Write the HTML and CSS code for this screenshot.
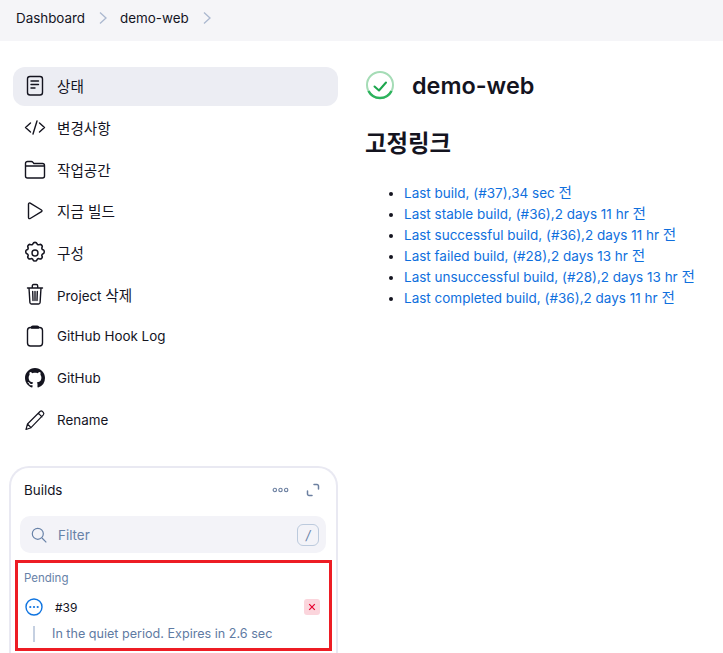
FILE: index.html
```html
<!DOCTYPE html>
<html lang="ko">
<head>
    <meta charset="UTF-8">
    <meta name="viewport" content="width=device-width, initial-scale=1.0">
    <title>demo-web</title>
    <link rel="stylesheet" href="styles.css">
</head>
<body>
    <div class="crumbs">
        <a href="#">Dashboard</a>
        <svg class="chev" viewBox="0 0 10 14"><path d="M2 1.500 8 7l-6 5.500"/></svg>
        <a href="#">demo-web</a>
        <svg class="chev" viewBox="0 0 10 14"><path d="M2 1.500 8 7l-6 5.500"/></svg>
    </div>
    <div class="page">
        <div class="side">
            <div class="tasks">
                <a class="task on" href="#">
                    <svg class="ico" viewBox="0 0 24 24"><rect x="4.500" y="2.500" width="15" height="18.500" rx="2.500"/><path d="M8 7h7.500M8 10.500h7.500M8 14h4"/></svg>
                    <span class="ko">상태</span>
                </a>
                <a class="task" href="#">
                    <svg class="ico" viewBox="0 0 24 24"><path d="M7.500 8 2.500 12.500l5 4.500M16.500 8l5 4.500-5 4.500M14 6 10 19"/></svg>
                    <span class="ko">변경사항</span>
                </a>
                <a class="task" href="#">
                    <svg class="ico" viewBox="0 0 24 24"><path d="M2.500 9V6.500a2 2 0 0 1 2-2h3.800c.8 0 1.200.3 1.700.9l.9 1.100h8.600a2 2 0 0 1 2 2v10.500a2 2 0 0 1-2 2h-15a2 2 0 0 1-2-2zM2.500 9h19"/></svg>
                    <span class="ko">작업공간</span>
                </a>
                <a class="task" href="#">
                    <svg class="ico" viewBox="0 0 24 24"><path d="M5.500 5c0-1 1-1.300 1.700-.9L18.500 11c.7.500.7 1.200 0 1.700L7.200 19.500c-.7.400-1.700 0-1.700-1z"/></svg>
                    <span class="ko">지금 빌드</span>
                </a>
                <a class="task" href="#">
                    <svg class="ico" viewBox="0 0 24 24"><circle cx="12" cy="12" r="3"/><path transform="translate(12 12) scale(1.120) translate(-12 -12)" d="M10.300 3.500c.4-1.300 3-1.300 3.400 0 .3 1 1.400 1.500 2.300 1 1.200-.7 3 1.200 2.300 2.400-.5.900 0 2 1 2.300 1.300.4 1.300 3 0 3.400-1 .3-1.500 1.400-1 2.300.7 1.200-1.100 3-2.300 2.300-.9-.5-2 0-2.300 1-.4 1.300-3 1.300-3.400 0-.3-1-1.400-1.500-2.300-1-1.200.7-3-1.100-2.300-2.300.5-.9 0-2-1-2.300-1.300-.4-1.300-3 0-3.400 1-.3 1.500-1.400 1-2.300-.7-1.200 1.100-3.100 2.300-2.400.9.500 2 0 2.300-1z"/></svg>
                    <span class="ko">구성</span>
                </a>
                <a class="task" href="#">
                    <svg class="ico" viewBox="0 0 24 24"><path d="M4.500 6h15M9.300 5.500V4c0-.8.500-1.500 1.300-1.500h2.800c.8 0 1.300.7 1.300 1.500v1.500M6 6l.9 14.500c.1.900.6 1.500 1.500 1.500h7.200c.9 0 1.400-.6 1.500-1.500L18 6M9.700 9.500l.3 9M12 9.500v9M14.300 9.500l-.3 9"/></svg>
                    <span>Project <span class="ko">삭제</span></span>
                </a>
                <a class="task" href="#">
                    <svg class="ico" viewBox="0 0 24 24"><rect x="4.500" y="3.500" width="15" height="18.500" rx="3"/><path d="M8.500 3.500c0-.8.500-1.300 1.300-1.300h4.400c.8 0 1.300.5 1.300 1.300v.5h-7z"/></svg>
                    <span>GitHub Hook Log</span>
                </a>
                <a class="task" href="#">
                    <svg class="ico solid" viewBox="0 0 16 16"><path d="M8 0C3.580 0 0 3.580 0 8c0 3.540 2.290 6.530 5.470 7.590.4.070.55-.17.55-.38 0-.19-.01-.82-.01-1.490-2.010.37-2.530-.49-2.690-.94-.09-.23-.48-.94-.82-1.130-.28-.15-.68-.52-.01-.53.630-.01 1.080.58 1.230.82.720 1.210 1.870.87 2.330.66.070-.52.280-.87.510-1.070-1.780-.2-3.640-.89-3.640-3.950 0-.87.310-1.590.820-2.150-.08-.2-.36-1.020.08-2.120 0 0 .67-.21 2.200.82.640-.18 1.320-.27 2-.27s1.360.09 2 .27c1.530-1.040 2.200-.82 2.200-.82.440 1.100.16 1.920.08 2.120.51.560.82 1.270.82 2.150 0 3.070-1.870 3.750-3.650 3.950.29.250.54.730.54 1.480 0 1.070-.01 1.930-.01 2.200 0 .21.150.46.550.38A8.010 8.010 0 0 0 16 8c0-4.420-3.580-8-8-8z"/></svg>
                    <span>GitHub</span>
                </a>
                <a class="task" href="#">
                    <svg class="ico thin" viewBox="0 0 24 24"><path d="M3 21.500 4.500 16 17 3.500c.8-.7 1.700-.7 2.400 0l.9.900c.7.700.7 1.600 0 2.400L8 19.700zM4.500 16 8 19.700M15.300 5.200l3.600 3.600"/></svg>
                    <span>Rename</span>
                </a>
            </div>

            <div class="builds">
                <div class="builds-head">
                    <span>Builds</span>
                    <div class="head-btns">
                        <svg class="more" viewBox="0 0 18 6"><circle cx="3" cy="3" r="1.800"/><circle cx="9" cy="3" r="1.800"/><circle cx="15" cy="3" r="1.800"/></svg>
                        <svg class="expand" viewBox="0 0 14 14"><path d="M8 1.500h3a1.500 1.500 0 0 1 1.500 1.500v3M6 12.500H3A1.500 1.500 0 0 1 1.500 11V8"/></svg>
                    </div>
                </div>
                <div class="filter">
                    <svg class="search" viewBox="0 0 16 16"><circle cx="6.800" cy="6.800" r="5.500"/><path d="m11 11 4.300 4.300"/></svg>
                    <span class="filter-txt">Filter</span>
                    <span class="key">/</span>
                </div>
                <div class="pending">
                    <div class="pending-title">Pending</div>
                    <div class="build-row">
                        <svg class="dots" viewBox="0 0 18 18"><circle class="ring" cx="9" cy="9" r="8"/><circle cx="5.300" cy="9" r="1.100"/><circle cx="9" cy="9" r="1.100"/><circle cx="12.700" cy="9" r="1.100"/></svg>
                        <span class="num">#39</span>
                        <span class="cancel"><svg viewBox="0 0 10 10"><path d="M1.500 1.500l7 7M8.500 1.500l-7 7"/></svg></span>
                    </div>
                    <div class="build-desc">In the quiet period. Expires in 2.6 sec</div>
                </div>
            </div>
        </div>

        <div class="main">
            <div class="title">
                <svg class="status" viewBox="0 0 30 30">
                    <circle class="track" cx="15" cy="15" r="13"/>
                    <path class="arc" d="M3.500 21a13 13 0 0 0 23 0"/>
                    <path class="tick" d="m9.500 16.500 4.500 4 7-8"/>
                </svg>
                <h1>demo-web</h1>
            </div>
            <h2>고정링크</h2>
            <ul class="links">
                <li><a href="#">Last build, (#37),34 sec <span class="ko">전</span></a></li>
                <li><a href="#">Last stable build, (#36),2 days 11 hr <span class="ko">전</span></a></li>
                <li><a href="#">Last successful build, (#36),2 days 11 hr <span class="ko">전</span></a></li>
                <li><a href="#">Last failed build, (#28),2 days 13 hr <span class="ko">전</span></a></li>
                <li><a href="#">Last unsuccessful build, (#28),2 days 13 hr <span class="ko">전</span></a></li>
                <li><a href="#">Last completed build, (#36),2 days 11 hr <span class="ko">전</span></a></li>
            </ul>
        </div>
    </div>
</body>
</html>
```

FILE: styles.css
```css
*{padding: 0; margin: 0; box-sizing: border-box;}
a{text-decoration: none;}
html, body{height: 653px; overflow: hidden;}
body{
    font-family: Inter, "Noto Sans CJK KR", sans-serif;
    font-size: 13.400px;
    color: #14141f;
    background-color: #fff;
}
.ko{font-size: 14.600px;}

/* top */
.crumbs{
    height: 41px;
    padding: 0 0 5px 16px;
    display: flex;
    align-items: center;
    background-color: #f5f5f8;
}
.crumbs a{color: #14141f;}
.chev{
    width: 10px;
    height: 14px;
    margin: 0 12px 0 13px;
    fill: none;
    stroke: #abb8cf;
    stroke-width: 1.300;
}

.page{
    display: flex;
    height: 612px;
    padding-left: 9px;
}

/* left */
.side{width: 329px; flex-shrink: 0;}
.tasks{
    height: 399px;
    padding: 26px 0 0 4px;
}
.task{
    height: 39px;
    margin-bottom: 2.800px;
    padding: 0 0 2px 10px;
    display: flex;
    align-items: center;
    gap: 10px;
    border-radius: 12px;
    color: #14141f;
}
.task.on{background-color: #ecedf3;}
.ico{
    width: 24px;
    height: 24px;
    fill: none;
    stroke: #14141f;
    stroke-width: 1.400;
    stroke-linecap: round;
    stroke-linejoin: round;
}
.ico.thin{stroke-width: 1.200;}
.ico.solid{
    width: 20px;
    height: 20px;
    margin: 0 2px;
    fill: #14141f;
    stroke: none;
}

/* card runs on below the window, so it has no bottom edge here */
.builds{
    margin-top: 26px;
    height: 187px;
    padding: 0 10px 0 9px;
    border: 2px solid #e9e9f2;
    border-bottom: none;
    border-radius: 20px 20px 0 0;
}
.builds-head{
    height: 48px;
    padding: 0 6px 4px 4px;
    display: flex;
    align-items: center;
    justify-content: space-between;
}
.head-btns{display: flex; align-items: center; gap: 17px;}
.more{
    width: 17px;
    height: 6px;
    fill: none;
    stroke: #6b7fa0;
    stroke-width: 1.200;
}
.expand{
    width: 14px;
    height: 14px;
    fill: none;
    stroke: #6b7fa0;
    stroke-width: 1.500;
    stroke-linecap: round;
}
.filter{
    height: 37px;
    padding: 0 7px 0 11px;
    display: flex;
    align-items: center;
    background-color: #f3f3f8;
    border-radius: 10px;
    color: #6882a8;
}
.search{
    width: 16px;
    height: 16px;
    fill: none;
    stroke: #6882a8;
    stroke-width: 1.200;
}
.filter-txt{margin-left: 11px; flex: 1;}
.key{
    width: 22px;
    height: 22px;
    border: 1px solid #bccadd;
    border-radius: 6px;
    text-align: center;
    font-size: 13px;
    line-height: 20px;
    font-style: italic;
}
.pending{
    margin: 7px -6px 0 -5px;
    height: 91px;
    padding: 0 9px 0 6px;
    border: 3px solid #ed1c24;
}
.pending-title{
    margin-top: 6px;
    font-size: 11.500px;
    line-height: 18px;
    color: #6882a8;
}
.build-row{
    margin-top: 11px;
    height: 18px;
    display: flex;
    align-items: center;
}
.dots{
    width: 18px;
    height: 18px;
    margin-left: 1px;
    fill: #0f74e0;
}
.dots .ring{fill: none; stroke: #0f74e0; stroke-width: 1.400;}
.num{margin-left: 12px; flex: 1; font-size: 12px;}
.cancel{
    width: 16px;
    height: 16px;
    background-color: #fbd5dc;
    border-radius: 3px;
    display: flex;
    align-items: center;
    justify-content: center;
}
.cancel svg{
    width: 8px;
    height: 8px;
    fill: none;
    stroke: #e6002e;
    stroke-width: 1.500;
}
.build-desc{
    margin: 10px 0 0 9px;
    padding-left: 17px;
    height: 16px;
    border-left: 2px solid #c5d0e1;
    font-size: 12.600px;
    line-height: 16px;
    color: #5f7ba3;
}

/* right */
.main{padding: 29px 0 0 27px; flex: 1;}
.title{
    height: 32px;
    display: flex;
    align-items: center;
    gap: 17px;
}
.status{
    width: 30px;
    height: 30px;
    margin-top: -2px;
    fill: none;
}
.track{stroke: #a5dcb6; stroke-width: 2;}
.arc{stroke: #2db35d; stroke-width: 2.500;}
.tick{stroke: #1ca64d; stroke-width: 2; stroke-linecap: round; stroke-linejoin: round;}
h1{font-size: 23.400px; font-weight: 600; line-height: 32px;}
h2{
    margin-top: 26px;
    font-size: 23.400px;
    font-weight: 700;
    line-height: 32px;
}
.links{
    margin-top: 23px;
    padding-left: 39px;
    font-size: 13.500px;
    line-height: 21px;
}
.links a{color: #0f6fdd;}
```
